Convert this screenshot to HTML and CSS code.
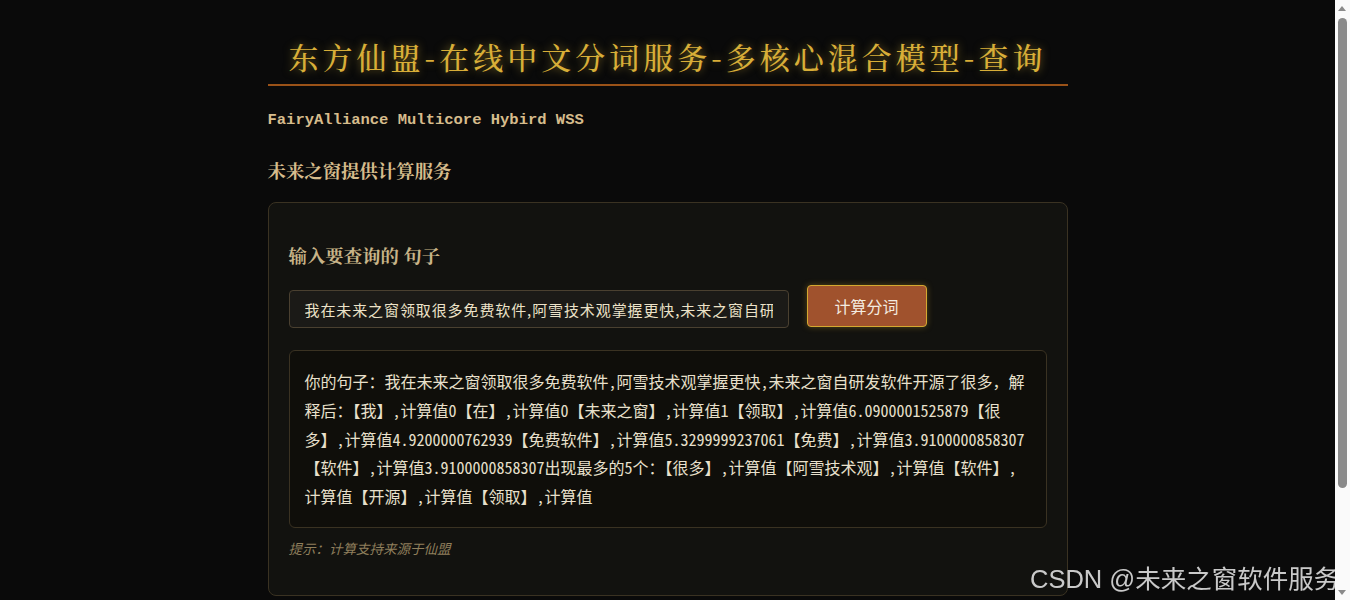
FILE: index.html
```html
<!DOCTYPE html>
<html lang="zh-CN">
<head>
    <meta charset="UTF-8">
    <title>东方仙盟-在线中文分词服务</title>
    <link rel="stylesheet" href="styles.css">
</head>
<body>
  <div class="page">
    <h1 class="title">东方仙盟-在线中文分词服务-多核心混合模型-查询</h1>
    <h2 class="sub_en">FairyAlliance Multicore Hybird WSS</h2>
    <h3 class="sub_cn">未来之窗提供计算服务</h3>

    <div class="card">
        <h3 class="label">输入要查询的 句子</h3>
        <div class="row">
            <input class="query" type="text" value="我在未来之窗领取很多免费软件,阿雪技术观掌握更快,未来之窗自研发软件开源了很多">
            <button class="btn" type="button">计算分词</button>
        </div>
        <div class="result">你的句子：我在未来之窗领取很多免费软件,阿雪技术观掌握更快,未来之窗自研发软件开源了很多，解释后：【我】,计算值0【在】,计算值0【未来之窗】,计算值1【领取】,计算值6.0900001525879【很多】,计算值4.9200000762939【免费软件】,计算值5.3299999237061【免费】,计算值3.9100000858307【软件】,计算值3.9100000858307出现最多的5个：【很多】,计算值【阿雪技术观】,计算值【软件】,计算值【开源】,计算值【领取】,计算值</div>
        <p class="hint">提示：计算支持来源于仙盟</p>
    </div>
  </div>
  <div class="mark">CSDN @未来之窗软件服务</div>
  <div class="scrollbar">
      <span class="arrow up"></span>
      <span class="thumb"></span>
      <span class="arrow down"></span>
  </div>
</body>
</html>
```

FILE: styles.css
```css
*{
    box-sizing: border-box;
}
body{
    margin: 0;
    padding-right: 15px;
    background-color: #0a0a0a;
    font-family: "Noto Sans CJK SC", sans-serif;
}
.page{
    width: 800px;
    margin: 0 auto;
    padding-top: 36px;
    padding-bottom: 60px;
}
.title{
    margin: 0;
    padding-bottom: 8px;
    font-family: "Noto Serif CJK SC", "Noto Sans CJK SC", serif;
    font-size: 30px;
    line-height: 40px;
    font-weight: 500;
    letter-spacing: 4px;
    text-align: center;
    color: #d8ae38;
    text-shadow: 0 0 8px rgba(212, 175, 55, 0.55);
    border-bottom: 2px solid #9a5218;
}
.sub_en{
    margin: 22px 0 0 0;
    font-family: "Liberation Mono", "DejaVu Sans Mono", monospace;
    font-size: 15.5px;
    line-height: 24px;
    font-weight: 700;
    color: #d6bc8c;
}
.sub_cn{
    margin: 26px 0 0 0;
    font-family: "Noto Serif CJK SC", "Noto Sans CJK SC", serif;
    font-size: 18.4px;
    line-height: 24px;
    font-weight: 700;
    color: #d6bc8c;
}
.card{
    margin-top: 20px;
    padding: 20px;
    background-color: #12120f;
    border: 1px solid #3a3222;
    border-radius: 8px;
}
.label{
    margin: 20px 0 0 0;
    font-family: "Noto Serif CJK SC", "Noto Sans CJK SC", serif;
    font-size: 18.4px;
    line-height: 24px;
    font-weight: 700;
    color: #c8b488;
}
.row{
    display: flex;
    align-items: flex-end;
    gap: 18px;
    margin-top: 18px;
}
.query{
    width: 500px;
    height: 38px;
    padding: 0 15px;
    background-color: #1b1a17;
    border: 1px solid #4a4030;
    border-radius: 4px;
    color: #ece2c8;
    font-family: "Noto Sans CJK SC", sans-serif;
    font-size: 15px;
    letter-spacing: 0.9px;
    outline: none;
}
.btn{
    width: 120px;
    height: 42px;
    margin-bottom: 1px;
    background-color: #a0522d;
    border: 1px solid #d4a830;
    border-radius: 4px;
    color: #f4ece0;
    font-family: "Noto Sans CJK SC", sans-serif;
    font-size: 16px;
    box-shadow: 0 0 6px rgba(212, 168, 48, 0.35);
}
.result{
    margin-top: 22px;
    padding: 16px 15px;
    background-color: #0f0e0a;
    border: 1px solid #3a3222;
    border-radius: 6px;
    color: #e8e0cc;
    font-family: "Noto Sans Mono CJK SC", "Noto Sans CJK SC", monospace;
    font-size: 16px;
    line-height: 28.8px;
}
.hint{
    margin: 12px 0 19px 0;
    font-size: 13.5px;
    line-height: 16px;
    font-style: italic;
    color: #8f7f5c;
}
.mark{
    position: fixed;
    left: 1030px;
    top: 558px;
    white-space: nowrap;
    font-family: "Liberation Sans", "Noto Sans CJK SC", sans-serif;
    font-size: 25.5px;
    color: rgba(235, 235, 235, 0.85);
}
.scrollbar{
    position: fixed;
    top: 0;
    right: 0;
    width: 15px;
    height: 600px;
    background-color: #fafafa;
}
.thumb{
    position: absolute;
    left: 3px;
    top: 18px;
    width: 9px;
    height: 470px;
    border-radius: 5px;
    background-color: #8a8a8a;
}
.arrow{
    position: absolute;
    left: 3px;
    width: 0;
    height: 0;
    border-left: 4.5px solid transparent;
    border-right: 4.5px solid transparent;
}
.up{
    top: 6px;
    border-bottom: 5px solid #8a8a8a;
}
.down{
    bottom: 5px;
    border-top: 5px solid #8a8a8a;
}
```
